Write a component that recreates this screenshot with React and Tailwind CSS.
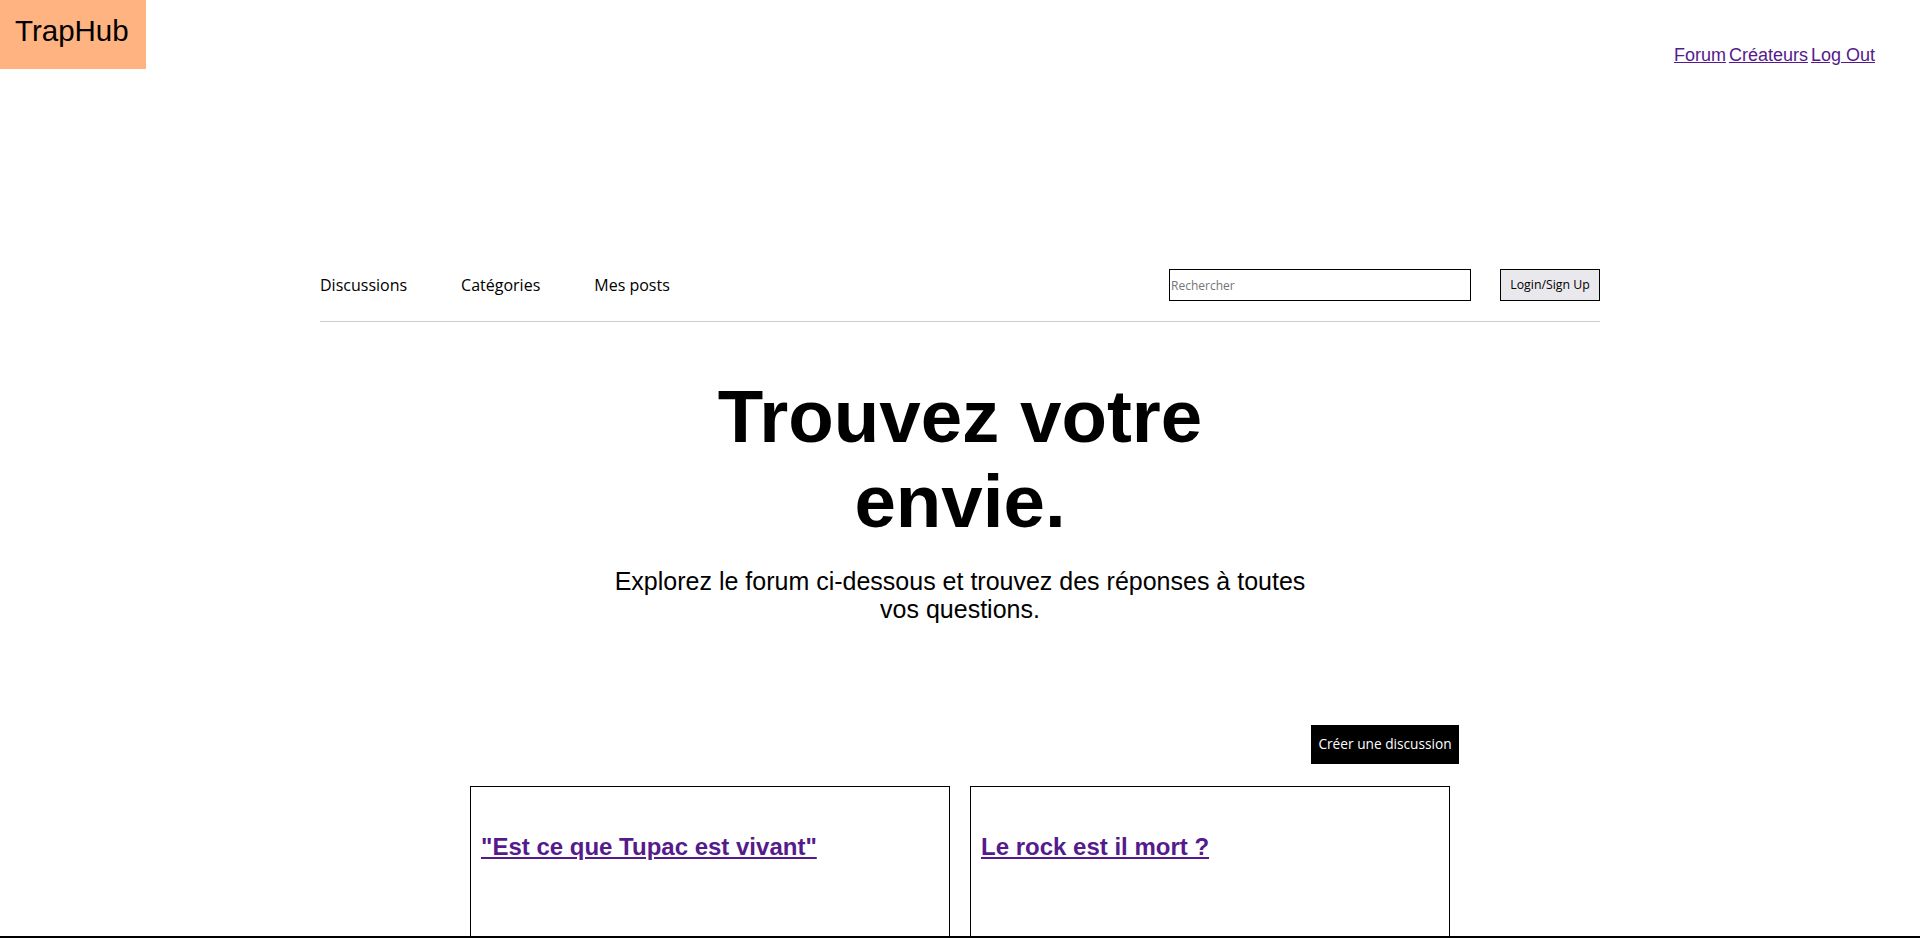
import React from 'react';

const posts = [
  { id: 1, title: '"Est ce que Tupac est vivant"' },
  { id: 2, title: 'Le rock est il mort ?' },
];

export default function App() {
  return (
    <div className="min-h-screen bg-white text-black font-['Liberation_Sans',Arial,sans-serif]">
      {/* ── Header ── */}
      <header className="flex justify-between h-[69px]">
        <div className="w-[146px] h-[69px] bg-[#ffb380] pl-[15px] pt-[14px] text-[29.5px] leading-[34px]">
          TrapHub
        </div>
        <nav className="flex gap-[3px] pt-[45px] pr-[45px] text-[18px] leading-[21px]">
          <a href="#" className="text-[#551a8b] underline">Forum</a>
          <a href="#" className="text-[#551a8b] underline">Créateurs</a>
          <a href="#" className="text-[#551a8b] underline">Log Out</a>
        </nav>
      </header>

      {/* ── Forum sub navigation ── */}
      <div className="w-[1280px] mx-auto mt-[200px] pb-[20px] border-b border-[#cccccc] flex items-center justify-between font-['Open_Sans',sans-serif]">
        <div className="flex items-center gap-[54px] text-[16px]">
          <span>Discussions</span>
          <span>Catégories</span>
          <span>Mes posts</span>
        </div>
        <div className="flex items-center gap-[29px]">
          <input
            type="text"
            placeholder="Rechercher"
            className="w-[302px] h-[32px] border border-black pl-[1px] text-[12px] placeholder:text-[#757575] outline-none"
          />
          <button className="w-[100px] h-[32px] border border-black bg-[#e9e9ed] text-[12.3px] text-black">
            Login/Sign Up
          </button>
        </div>
      </div>

      {/* ── Hero ── */}
      <section className="w-[700px] mx-auto mt-[52px] text-center">
        <h1 className="text-[74.5px] leading-[85px] font-bold">Trouvez votre envie.</h1>
        <p className="mt-[24px] text-[25px] leading-[27.6px]">
          Explorez le forum ci-dessous et trouvez des réponses à toutes vos questions.
        </p>
      </section>

      {/* ── Create button ── */}
      <div className="w-[1000px] mx-auto mt-[102px] flex justify-end pr-[1px]">
        <button className="w-[148px] h-[39px] bg-black text-white text-[13.7px] font-['Open_Sans',sans-serif]">
          Créer une discussion
        </button>
      </div>

      {/* ── Discussion cards ── */}
      <div className="w-[1000px] mx-auto mt-[22px] px-[10px] flex gap-[20px]">
        {posts.map((p) => (
          <div key={p.id} className="w-[480px] h-[150px] border-x border-t border-black px-[10px] pt-[46px]">
            <h2 className="text-[24px] leading-[28px] font-bold">
              <a href="#" className="text-[#551a8b] underline">{p.title}</a>
            </h2>
          </div>
        ))}
      </div>

      <footer className="border-t-2 border-black h-[120px]" />
    </div>
  );
}
